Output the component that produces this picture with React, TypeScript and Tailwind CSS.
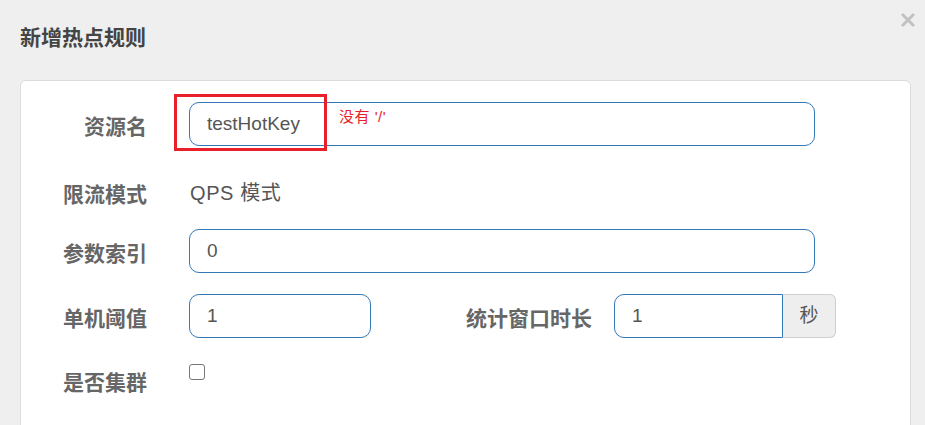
import React from "react";

const font = { fontFamily: '"Liberation Sans", "Noto Sans CJK SC", sans-serif' };

function Label({ children }: { children: React.ReactNode }) {
  return (
    <div className="w-[126px] shrink-0 flex justify-end pt-[6px] text-[21px] font-bold text-[#666]">
      {children}
    </div>
  );
}

export default function App() {
  return (
    <div className="w-[925px] h-[425px] overflow-hidden bg-[#efefef] relative" style={font}>
      <div className="flex items-center justify-between h-[80px] pl-[20px] pr-[9px] pb-[4px]">
        <h4 className="text-[21px] font-bold text-[#444]">新增热点规则</h4>
        <button className="self-start mt-[12px] text-[#c2c2c2]">
          <svg width="16" height="16" viewBox="0 0 16 16">
            <path d="M2 2 L14 14 M14 2 L2 14" stroke="currentColor" strokeWidth="3" />
          </svg>
        </button>
      </div>

      <div className="ml-[20px] w-[891px] h-[400px] bg-white border border-[#dcdcdc] rounded-[6px] pt-[21px]">
        {/* 资源名 */}
        <div className="flex items-center h-[44px]">
          <Label>资源名</Label>
          <div className="relative ml-[42px] w-[626px] h-[44px]">
            <div className="h-full border border-[#3578b6] rounded-[10px] flex items-center pl-[17px] text-[19px] text-[#555]">
              testHotKey
            </div>
            <div className="absolute left-[-15px] top-[-8px] w-[153px] h-[57px] border-[3px] border-[#e8202a]" />
            <span className="absolute left-[150px] top-[4px] text-[15px] tracking-[0.5px] text-[#e8202a]">没有 '/'</span>
          </div>
        </div>

        {/* 限流模式 */}
        <div className="flex items-center h-[44px] mt-[24px]">
          <Label>限流模式</Label>
          <div className="ml-[43px] pt-[2px] text-[20px] tracking-[0.6px] text-[#555]">QPS 模式</div>
        </div>

        {/* 参数索引 */}
        <div className="flex items-center h-[44px] mt-[15px]">
          <Label>参数索引</Label>
          <div className="ml-[42px] w-[626px] h-[44px] border border-[#3578b6] rounded-[10px] flex items-center pl-[17px] text-[19px] text-[#555]">
            0
          </div>
        </div>

        {/* 单机阈值 / 统计窗口时长 */}
        <div className="flex items-center h-[44px] mt-[21px]">
          <Label>单机阈值</Label>
          <div className="ml-[42px] w-[182px] h-[44px] border border-[#3578b6] rounded-[10px] flex items-center pl-[17px] text-[19px] text-[#555]">
            1
          </div>
          <div className="ml-[95px] pt-[6px] text-[21px] font-bold text-[#666]">统计窗口时长</div>
          <div className="ml-[22px] flex h-[44px]">
            <div className="w-[169px] h-full border border-[#3578b6] rounded-l-[10px] flex items-center pl-[17px] text-[19px] text-[#555]">
              1
            </div>
            <div className="w-[53px] h-full bg-[#eeeeee] border border-l-0 border-[#cfcfcf] rounded-r-[6px] flex items-center justify-center text-[19px] text-[#555]">
              秒
            </div>
          </div>
        </div>

        {/* 是否集群 */}
        <div className="flex items-start mt-[20px]">
          <div className="h-[44px] flex items-center">
            <Label>是否集群</Label>
          </div>
          <div className="ml-[42px] mt-[6px] w-[16px] h-[16px] border border-[#777] rounded-[3px] bg-white" />
        </div>
      </div>
    </div>
  );
}
